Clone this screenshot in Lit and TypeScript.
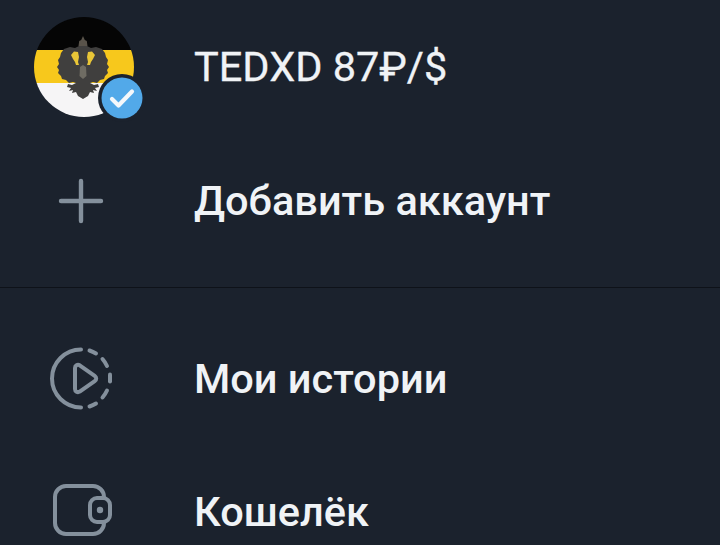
import { LitElement, html, css, svg } from "lit";
import { customElement } from "lit/decorators.js";

const eagleHalf = svg`
  <path fill="#403f3e" d="M49 29L53 29L57 31L62 30L68 32L71 36L72 40L74 43L73 47L75 50L73 53L74 56L71 59L70 62L66 63L63 66L59 65L56 66L60 68L64 67L65 70L61 71L63 74L59 73L60 76L56 75L54 79L49 82Z"/>
  <path fill="#e9c637" d="M54 35L58 34.500L61 38L59 42L57 45L56 48L53 48L54 45L53 40Z"/>
  <path fill="#6f6c63" d="M49 48L52 50L52.500 59L49 62Z"/>
`;

const avatar = svg`<svg class="avatar" viewBox="0 0 100 100" width="100" height="100" aria-hidden="true">
  <defs><clipPath id="c"><circle cx="50" cy="50" r="50"/></clipPath></defs>
  <g clip-path="url(#c)">
    <rect width="100" height="33.500" fill="#050505"/>
    <rect y="33" width="100" height="33.500" fill="#f7c81c"/>
    <rect y="66" width="100" height="34" fill="#f6f5f6"/>
    <path d="M49 19l1.800 4 2 1 .7 5-4.500 2-4.500-2 .7-5 2-1z" fill="#59534a"/>
    ${eagleHalf}
    <g transform="translate(98 0) scale(-1 1)">${eagleHalf}</g>
  </g>
</svg>`;

const badge = svg`<svg class="badge" viewBox="0 0 48 48" width="48" height="48" aria-hidden="true">
  <circle cx="24" cy="24" r="24" fill="#1b222d"/>
  <circle cx="24" cy="24" r="20.500" fill="#52a9e9"/>
  <path d="M14 25l6.500 6.500 13.500-14" fill="none" stroke="#f4f8fb" stroke-width="4.200" stroke-linecap="round" stroke-linejoin="round"/>
</svg>`;

const plus = svg`<svg viewBox="0 0 64 64" width="64" height="64" aria-hidden="true">
  <path d="M32 12v40M12 32h40" fill="none" stroke="#84909c" stroke-width="4.400" stroke-linecap="round"/>
</svg>`;

const story = svg`<svg viewBox="0 0.500 64 64" width="64" height="64" aria-hidden="true">
  <g fill="none" stroke="#84909c" stroke-width="4" stroke-linecap="round" stroke-linejoin="round">
    <path d="M32 3A29 29 0 0 0 32 61"/>
    <path d="M40.500 4a29 29 0 0 1 6.500 3"/>
    <path d="M53.500 12.500a29 29 0 0 1 4.500 7"/>
    <path d="M61 28v7"/>
    <path d="M58 44a29 29 0 0 1-4.500 7"/>
    <path d="M47 57a29 29 0 0 1-6.500 3"/>
    <path d="M26 21.500c0-2.500 2.500-4 4.700-2.700l15 10.500c2 1.400 2 3.900 0 5.300l-15 10.500c-2.200 1.300-4.700-.2-4.700-2.700z"/>
  </g>
</svg>`;

const wallet = svg`<svg viewBox="0 0 64 64" width="64" height="64" aria-hidden="true">
  <g fill="none" stroke="#84909c" stroke-width="4" stroke-linecap="round" stroke-linejoin="round">
    <path d="M55 17a11 11 0 0 0-11-11H17A11 11 0 0 0 6 17v26a11 11 0 0 0 11 11h27a11 11 0 0 0 11-11v-1"/>
    <rect x="41" y="18" width="20" height="24" rx="7"/>
  </g>
  <circle cx="51" cy="30" r="3.200" fill="#84909c"/>
</svg>`;

@customElement("app-root")
export class AppRoot extends LitElement {
  static styles = css`
    :host {
      display: block;
      width: 720px;
      height: 545px;
      overflow: hidden;
      background: #1b222d;
      font-family: Roboto, "Noto Sans", sans-serif;
    }
    .row {
      display: flex;
      align-items: center;
      height: 133px;
      padding-left: 34px;
    }
    .icon {
      flex: none;
      width: 94px;
      height: 100px;
      margin-right: 66px;
      display: flex;
      align-items: center;
      justify-content: center;
      position: relative;
    }
    .icon.pic {
      width: 100px;
      margin-right: 60px;
    }
    .label {
      font-size: 41.500px;
      font-weight: 500;
      line-height: 48px;
      color: #f0f3f6;
      white-space: nowrap;
    }
    .name {
      font-weight: 400;
      -webkit-text-stroke: 0.3px #f0f3f6;
    }
    .badge {
      position: absolute;
      left: 64px;
      top: 57px;
    }
    .avatar { display: block; }
    .head { height: 134px; }
    .divider {
      height: 1px;
      margin-top: 20px;
      background: #0e1219;
    }
    .list { padding-top: 24px; }
    svg { display: block; }
  `;

  render() {
    return html`
      <div class="row head">
        <div class="icon pic">${avatar}${badge}</div>
        <div class="label name">TEDXD 87₽/$</div>
      </div>
      <div class="row">
        <div class="icon">${plus}</div>
        <div class="label">Добавить аккаунт</div>
      </div>
      <div class="divider"></div>
      <div class="list">
        <div class="row">
          <div class="icon">${story}</div>
          <div class="label">Мои истории</div>
        </div>
        <div class="row">
          <div class="icon">${wallet}</div>
          <div class="label">Кошелёк</div>
        </div>
      </div>
    `;
  }
}
